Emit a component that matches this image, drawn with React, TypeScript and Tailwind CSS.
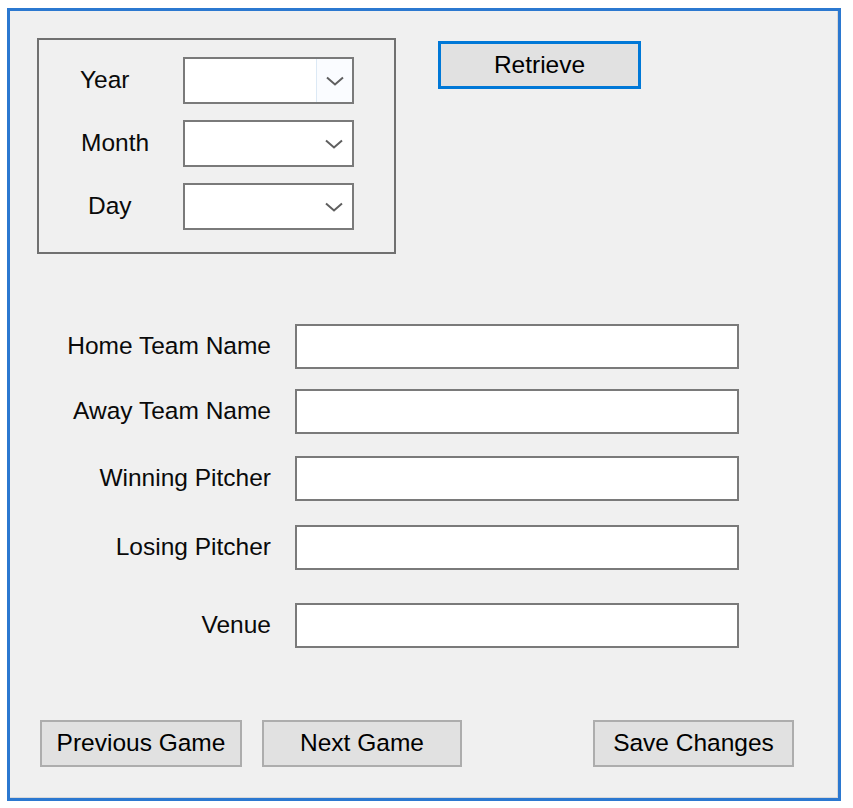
import React from 'react';

const font = { fontFamily: '"Liberation Sans", Arial, sans-serif' };

function Chevron() {
  return (
    <svg width="20" height="12" viewBox="0 0 20 12" className="shrink-0">
      <path d="M2 2.5 L10 9.5 L18 2.5" fill="none" stroke="#5f5f5f" strokeWidth="2" />
    </svg>
  );
}

function Combo({ withButton = false }: { withButton?: boolean }) {
  return (
    <div className="flex h-[47px] w-[171px] items-stretch border-2 border-[#7a7a7a] bg-white">
      <div className="flex-1" />
      <div
        className={
          withButton
            ? 'flex w-[36px] items-center justify-center border-l border-[#dce9f5] bg-[#fafcff]'
            : 'flex w-[36px] items-center justify-center'
        }
      >
        <Chevron />
      </div>
    </div>
  );
}

interface FieldRowProps {
  label: string;
  top: string;
}

function FieldRow({ label, top }: FieldRowProps) {
  return (
    <div className={`flex items-center ${top}`}>
      <div className="w-[261px] text-right leading-none">{label}</div>
      <div className="ml-[24px] h-[45px] w-[444px] border-2 border-[#7a7a7a] bg-white" />
    </div>
  );
}

function WinButton({ label, className }: { label: string; className: string }) {
  return (
    <button
      className={`flex h-[47px] items-center justify-center border-2 border-[#adadad] bg-[#e1e1e1] leading-none text-black ${className}`}
    >
      {label}
    </button>
  );
}

export default function App() {
  return (
    <div className="min-h-screen bg-white text-[24.5px] text-[#0a0a0a]" style={font}>
      <div className="ml-[7px] pt-[8px]">
        <div className="h-[793px] w-[834px] border-[3px] border-[#2b78d0] bg-[#f0f0f0]">
          <div className="h-full w-full border-r border-b border-[#d8d8d8]">
            {/* Date selection */}
            <div className="flex items-start">
              <div className="ml-[27px] mt-[27px] h-[216px] w-[359px] border-2 border-[#707070]">
                <div className="mt-[17px] flex flex-col gap-[16px]">
                  <div className="flex items-center">
                    <div className="w-[144px] pl-[41px] leading-none">Year</div>
                    <Combo withButton />
                  </div>
                  <div className="flex items-center">
                    <div className="w-[144px] pl-[42px] leading-none">Month</div>
                    <Combo />
                  </div>
                  <div className="flex items-center">
                    <div className="w-[144px] pl-[49px] leading-none">Day</div>
                    <Combo />
                  </div>
                </div>
              </div>
              <button className="ml-[42px] mt-[30px] flex h-[48px] w-[203px] items-center justify-center border-[3px] border-[#0078d7] bg-[#e1e1e1] leading-none text-black">
                Retrieve
              </button>
            </div>

            {/* Game details */}
            <FieldRow label="Home Team Name" top="mt-[70px]" />
            <FieldRow label="Away Team Name" top="mt-[20px]" />
            <FieldRow label="Winning Pitcher" top="mt-[22px]" />
            <FieldRow label="Losing Pitcher" top="mt-[24px]" />
            <FieldRow label="Venue" top="mt-[33px]" />

            {/* Navigation */}
            <div className="mt-[72px] flex">
              <WinButton label="Previous Game" className="ml-[30px] w-[202px]" />
              <WinButton label="Next Game" className="ml-[20px] w-[200px]" />
              <WinButton label="Save Changes" className="ml-[131px] w-[201px]" />
            </div>
          </div>
        </div>
      </div>
    </div>
  );
}
